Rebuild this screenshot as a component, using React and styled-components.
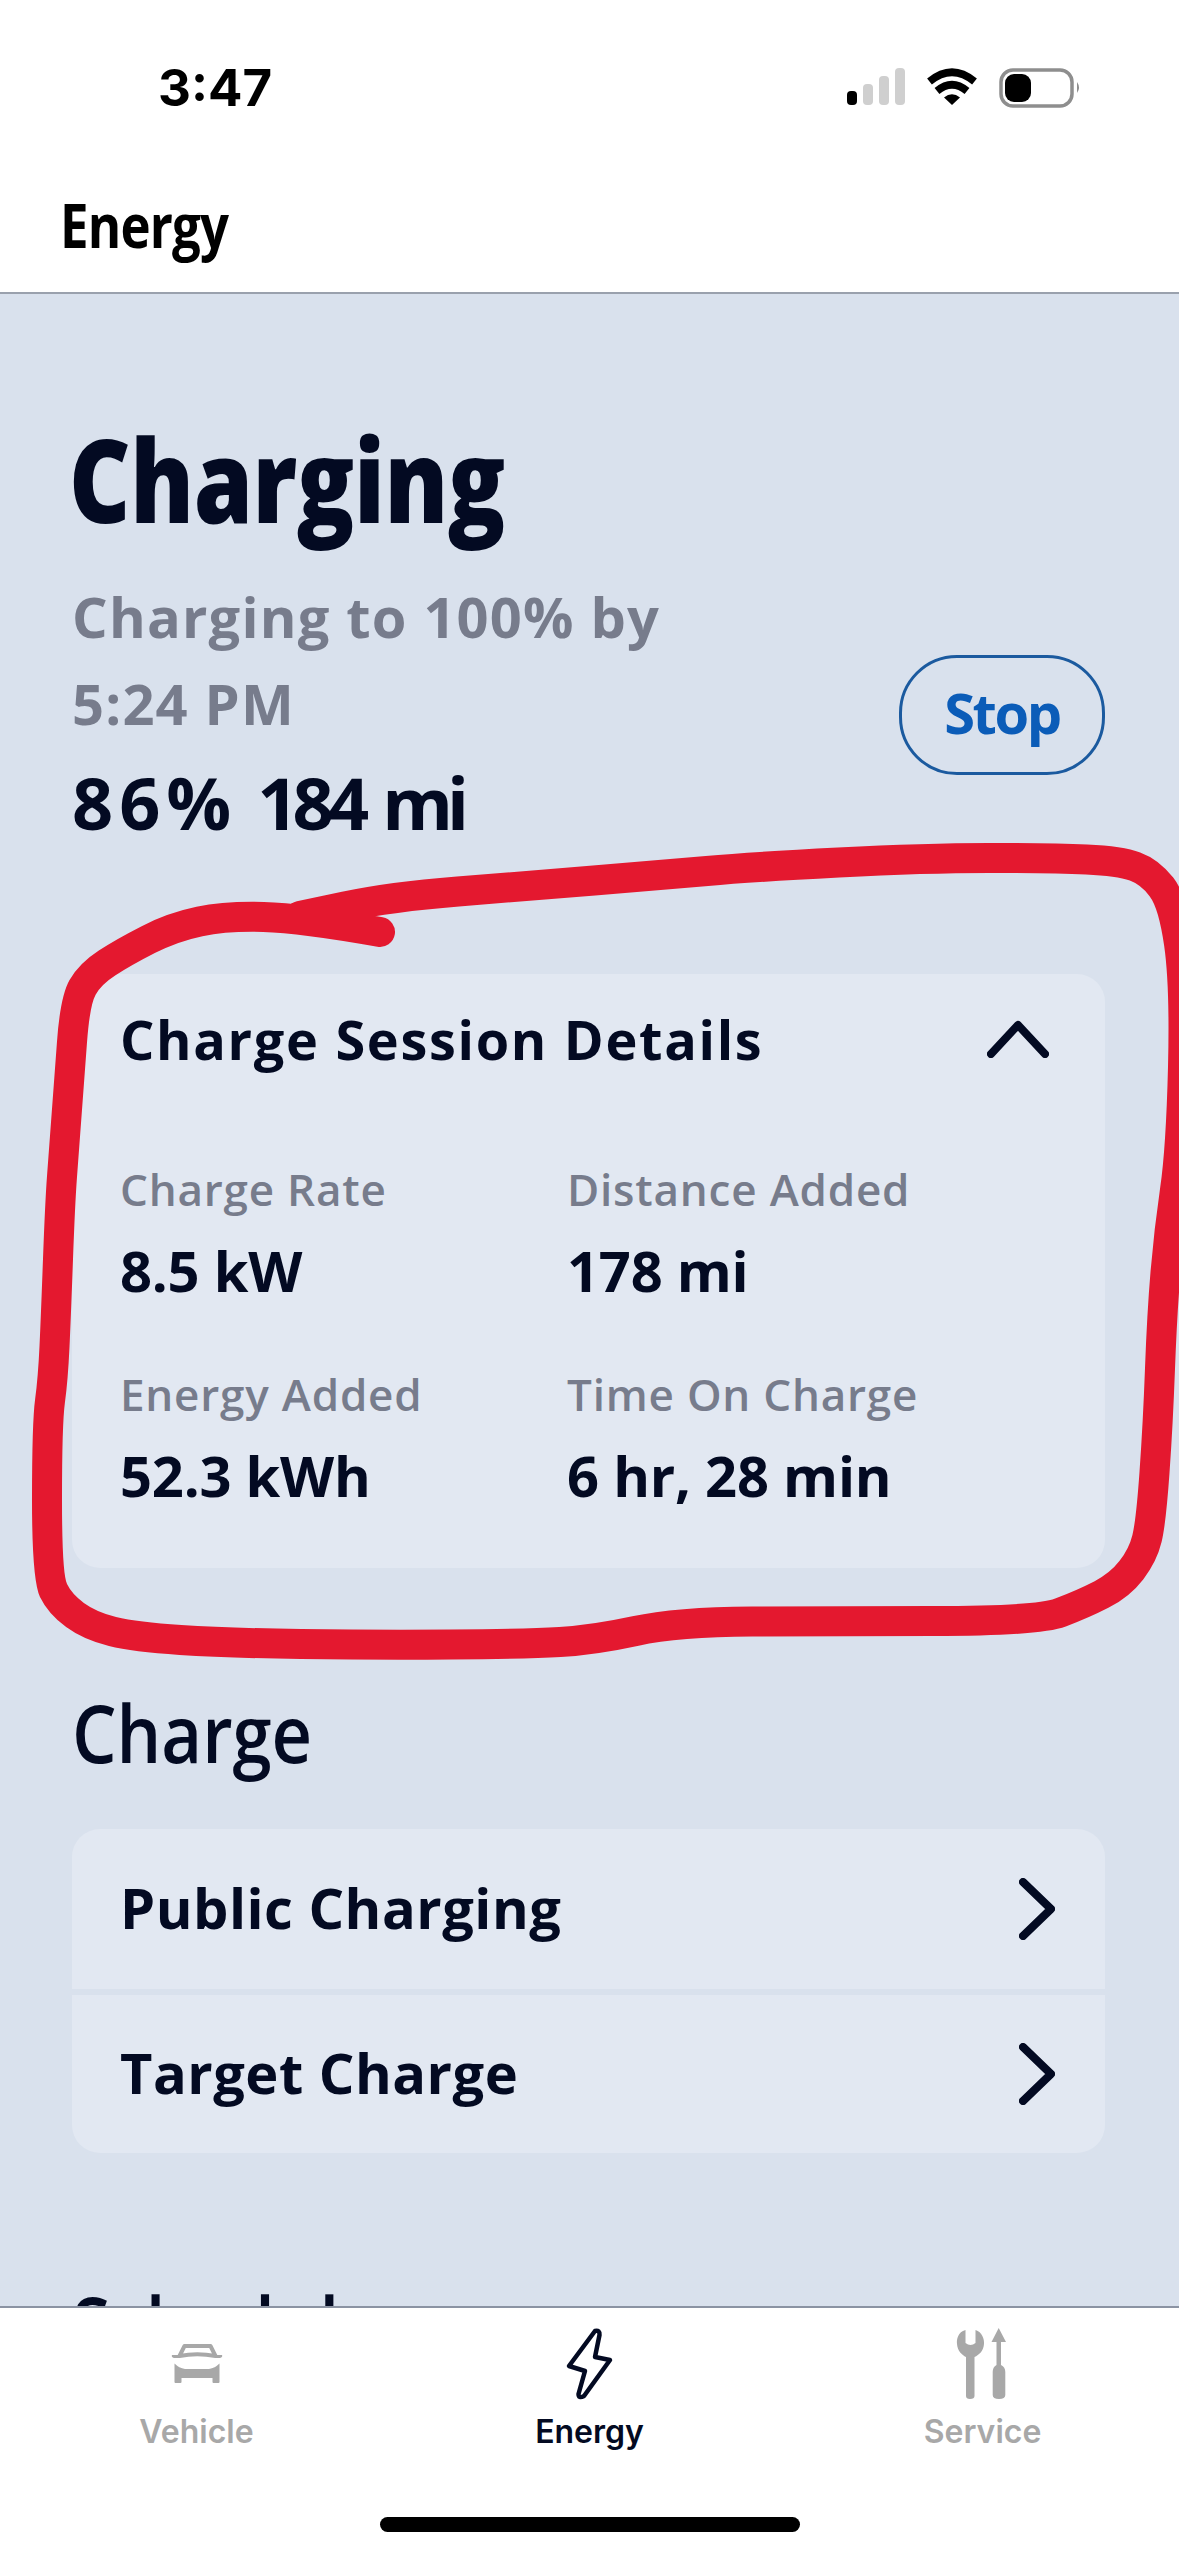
import React from 'react'
import styled, { createGlobalStyle } from 'styled-components'

const navy = '#030a22'
const grey = '#777c8c'

const GlobalStyle = createGlobalStyle`
html, body {
  margin:0;
  padding:0;
  background:#fff;
}
* {
  box-sizing:border-box;
}
`
const Screen = styled.div`
position:relative;
width:1179px;
height:2556px;
display:flex;
flex-direction:column;
overflow:hidden;
background:#fff;
color:${navy};
font-family:"Open Sans", sans-serif;
`
const TopBar = styled.header`
flex:none;
height:294px;
border-bottom:2px solid #9aa1ad;
background:#fff;
`
const StatusBar = styled.div`
display:flex;
justify-content:space-between;
align-items:flex-start;
padding:58px 98px 0 158px;
`
const Time = styled.div`
font-family:Inter, sans-serif;
font-size:51px;
line-height:60px;
font-weight:700;
color:#000;
`
const StatusIcons = styled.div`
display:flex;
align-items:flex-start;
gap:22px;
padding-top:10px;
`
const TopTitle = styled.div`
margin:67px 0 0 60px;
font-size:60px;
line-height:80px;
font-weight:700;
letter-spacing:-1px;
color:#000;
transform:scaleX(.85);
transform-origin:left center;
`
const Main = styled.main`
flex:1;
min-height:0;
overflow:hidden;
padding:119px 74px 0 72px;
background:#d9e1ed;
`
const PageTitle = styled.h1`
margin:0 0 0 -3px;
font-size:116px;
line-height:130px;
font-weight:800;
letter-spacing:-.5px;
transform:scaleX(.82);
transform-origin:left center;
`
const Summary = styled.div`
display:flex;
justify-content:space-between;
align-items:center;
margin-top:30px;
`
const SummaryText = styled.div`
display:flex;
flex-direction:column;
gap:10px;
`
const Eta = styled.div`
font-size:56px;
line-height:87px;
font-weight:700;
letter-spacing:1.2px;
color:${grey};
`
const Level = styled.div`
display:flex;
gap:20px;
font-size:72px;
line-height:90px;
font-weight:700;
`
const LevelPercent = styled.span`
letter-spacing:6px;
`
const LevelRange = styled.span`
letter-spacing:-5.8px;
word-spacing:6px;
`
const StopButton = styled.button`
width:206px;
height:120px;
margin-top:10px;
padding:0 0 6px;
border:3px solid #1b5a9f;
border-radius:58px;
background:transparent;
color:#0b5cb8;
font-family:inherit;
font-size:56px;
font-weight:700;
letter-spacing:-2.4px;
`
const Card = styled.section`
margin-top:127px;
padding:30px 48px 58px;
border-radius:28px;
background:#e2e8f2;
`
const CardHeader = styled.div`
display:flex;
justify-content:space-between;
align-items:center;
padding-right:8px;
`
const CardTitle = styled.h2`
margin:0;
font-size:54px;
line-height:70px;
font-weight:700;
letter-spacing:1.7px;
`
const Stats = styled.div`
display:grid;
grid-template-columns:447px 1fr;
row-gap:59px;
margin-top:85px;
`
const Stat = styled.div`
display:flex;
flex-direction:column;
gap:16px;
`
const StatLabel = styled.div`
font-size:44px;
line-height:60px;
font-weight:600;
letter-spacing:.8px;
color:${grey};
`
const StatValue = styled.div`
font-size:56px;
line-height:70px;
font-weight:700;
letter-spacing:-.2px;
`
const SectionTitle = styled.h3`
margin:${props => props.$top}px 0 0;
font-size:80px;
line-height:100px;
font-weight:600;
transform:scaleX(.88);
transform-origin:left center;
`
const LinkList = styled.div`
display:flex;
flex-direction:column;
gap:6px;
margin-top:47px;
border-radius:28px;
overflow:hidden;
`
const LinkRow = styled.div`
display:flex;
justify-content:space-between;
align-items:center;
height:${props => props.$height}px;
padding:0 50px 0 48px;
background:#e2e8f2;
`
const LinkLabel = styled.span`
margin-bottom:5px;
font-size:56px;
font-weight:700;
letter-spacing:.5px;
`
const BottomNav = styled.nav`
position:relative;
flex:none;
height:250px;
display:flex;
flex-direction:column;
padding-top:18px;
border-top:2px solid #8b93a3;
background:#fff;
`
const Tabs = styled.div`
display:grid;
grid-template-columns:repeat(3, 1fr);
`
const Tab = styled.div`
display:flex;
flex-direction:column;
align-items:center;
gap:10px;
font-family:Inter, sans-serif;
font-size:32px;
line-height:40px;
font-weight:600;
color:${props => (props.$active ? navy : '#a8a8a8')};
`
const TabIcon = styled.div`
height:76px;
display:flex;
align-items:center;
justify-content:center;
`
const HomeBar = styled.div`
width:420px;
height:15px;
margin:auto auto 24px;
border-radius:8px;
background:#000;
`
const Scribble = styled.svg`
position:absolute;
left:0;
top:0;
pointer-events:none;
`

const SignalIcon = () => (
  <svg width="58" height="38" viewBox="0 0 58 38">
    <rect x="0" y="23" width="10" height="14" rx="4" fill="#000" />
    <rect x="16" y="16" width="10" height="21" rx="4" fill="#cfcfcf" />
    <rect x="32" y="8" width="10" height="29" rx="4" fill="#cfcfcf" />
    <rect x="48" y="0" width="10" height="37" rx="4" fill="#cfcfcf" />
  </svg>
)

const WifiIcon = () => (
  <svg width="50" height="38" viewBox="0 0 50 38" fill="none" stroke="#000" strokeWidth="7.5">
    <path d="M2.5 13.5 Q25 -5 47.5 13.5" />
    <path d="M10 23 Q25 10.5 40 23" />
    <path d="M25 37 L17 29.5 Q25 23 33 29.5 Z" fill="#000" stroke="none" />
  </svg>
)

const BatteryIcon = () => (
  <svg width="82" height="40" viewBox="0 0 82 40">
    <rect x="2" y="2" width="71" height="36" rx="12" fill="none" stroke="#8e8e8e" strokeWidth="3.5" />
    <rect x="6" y="6" width="26" height="28" rx="9" fill="#000" />
    <path d="M78 14 Q82 19.5 78 25 Z" fill="#8e8e8e" />
  </svg>
)

const ChevronUp = () => (
  <svg width="62" height="38" viewBox="0 0 62 38" fill="none" stroke={navy} strokeWidth="8" strokeLinecap="round" strokeLinejoin="round">
    <path d="M4 34 L31 5 L58 34" />
  </svg>
)

const ChevronRight = () => (
  <svg width="36" height="62" viewBox="0 0 36 62" fill="none" stroke={navy} strokeWidth="8" strokeLinecap="round" strokeLinejoin="round">
    <path d="M4 4 L32 31 L4 58" />
  </svg>
)

const VehicleIcon = () => (
  <svg width="52" height="40" viewBox="0 0 52 40">
    <path d="M8.5 12 L13.5 2 H39.5 L44.5 12 Q26 8.5 8.5 12 Z" fill="none" stroke="#a8a8a8" strokeWidth="4" strokeLinejoin="round" />
    <path d="M1 11 H8 V14 H3 Q0 13 1 11 Z M51 11 H44 V14 H49 Q52 13 51 11 Z" fill="#a8a8a8" />
    <path d="M3.5 19.5 Q8 24 14 25 H38 Q44 24 48.5 19.5 V38 Q48.5 39 47.5 39 H42.5 Q41.5 39 41.5 38 V34 H10.5 V38 Q10.5 39 9.5 39 H4.5 Q3.5 39 3.5 38 Z" fill="#a8a8a8" />
  </svg>
)

const BoltIcon = () => (
  <svg width="50" height="76" viewBox="44 10 50 76" fill="none" stroke={navy} strokeWidth="4.5" strokeLinejoin="round">
    <path d="M74 15 Q79 14 78.5 19 L74 41 L89 44 L63 80 Q57.5 83 57.5 78 L64 55 L48 50 Z" />
  </svg>
)

const ServiceIcon = () => (
  <svg width="56" height="76" viewBox="44 10 56 76" fill="#a8a8a8">
    <path d="M54.5 14 C47 16 45.5 23 46 28 C46.5 35 51 39 55 41 L55 80 Q55 83 59 83 Q63.5 83 63.5 80 L63.5 41 C68 39 72.5 35 73 28 C73.5 23 71 16 64.5 14 L64.5 27 Q59.5 31 54.5 27 Z" />
    <path d="M87.7 12 L95 26 H90 V49 Q94.3 51 94.3 56 V79 Q94.3 83 88 83 Q81.7 83 81.7 79 V56 Q81.7 51 85.5 49 V26 H80.5 Z" />
  </svg>
)

// the red marker ring drawn over the screenshot, points follow the hand drawn line
const ringPoints = [
  [380, 932], [301, 918], [226, 916], [173, 927], [124, 952], [90, 974], [75, 1001], [69, 1083],
  [64, 1149], [60, 1204], [56, 1314], [53, 1379], [47, 1423], [47, 1577], [60, 1604], [90, 1626],
  [135, 1637], [226, 1643], [376, 1645], [526, 1644], [594, 1640], [677, 1622], [827, 1621], [1038, 1621],
  [1083, 1604], [1120, 1585], [1143, 1555], [1151, 1522], [1158, 1423], [1162, 1314], [1169, 1231], [1181, 1149],
  [1185, 985], [1173, 902], [1150, 872], [1120, 861], [1053, 858], [925, 858], [752, 867], [662, 875],
  [526, 886], [390, 897], [300, 916],
]

const smoothPath = points => {
  let d = `M${points[0][0]} ${points[0][1]}`
  for (let i = 1; i < points.length - 1; i++) {
    const [x, y] = points[i]
    const [nx, ny] = points[i + 1]
    d += ` Q${x} ${y} ${(x + nx) / 2} ${(y + ny) / 2}`
  }
  const last = points[points.length - 1]
  return `${d} L${last[0]} ${last[1]}`
}

const stats = [
  { label: 'Charge Rate', value: '8.5 kW' },
  { label: 'Distance Added', value: '178 mi' },
  { label: 'Energy Added', value: '52.3 kWh' },
  { label: 'Time On Charge', value: '6 hr, 28 min' },
]

const links = [
  { label: 'Public Charging', height: 160 },
  { label: 'Target Charge', height: 158 },
]

export default () => {
  return (
    <Screen>
      <GlobalStyle />
      <TopBar>
        <StatusBar>
          <Time>3:47</Time>
          <StatusIcons>
            <SignalIcon />
            <WifiIcon />
            <BatteryIcon />
          </StatusIcons>
        </StatusBar>
        <TopTitle>Energy</TopTitle>
      </TopBar>
      <Main>
        <PageTitle>Charging</PageTitle>
        <Summary>
          <SummaryText>
            <Eta>Charging to 100% by<br />5:24 PM</Eta>
            <Level>
              <LevelPercent>86%</LevelPercent>
              <LevelRange>184 mi</LevelRange>
            </Level>
          </SummaryText>
          <StopButton>Stop</StopButton>
        </Summary>
        <Card>
          <CardHeader>
            <CardTitle>Charge Session Details</CardTitle>
            <ChevronUp />
          </CardHeader>
          <Stats>
            {stats.map(stat => (
              <Stat key={stat.label}>
                <StatLabel>{stat.label}</StatLabel>
                <StatValue>{stat.value}</StatValue>
              </Stat>
            ))}
          </Stats>
        </Card>
        <SectionTitle $top={114}>Charge</SectionTitle>
        <LinkList>
          {links.map(link => (
            <LinkRow key={link.label} $height={link.height}>
              <LinkLabel>{link.label}</LinkLabel>
              <ChevronRight />
            </LinkRow>
          ))}
        </LinkList>
        <SectionTitle $top={121}>Schedule</SectionTitle>
      </Main>
      <BottomNav>
        <Tabs>
          <Tab>
            <TabIcon><VehicleIcon /></TabIcon>
            Vehicle
          </Tab>
          <Tab $active>
            <TabIcon><BoltIcon /></TabIcon>
            Energy
          </Tab>
          <Tab>
            <TabIcon><ServiceIcon /></TabIcon>
            Service
          </Tab>
        </Tabs>
        <HomeBar />
      </BottomNav>
      <Scribble width="1179" height="2556" viewBox="0 0 1179 2556" fill="none">
        <path d={smoothPath(ringPoints)} stroke="#e4182f" strokeWidth="30" strokeLinecap="round" strokeLinejoin="round" />
      </Scribble>
    </Screen>
  )
}
